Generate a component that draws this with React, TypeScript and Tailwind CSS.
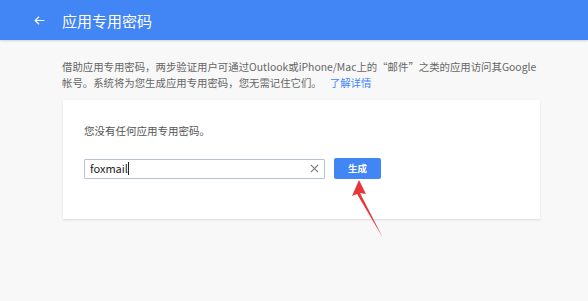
import React from 'react';

const FONT = { fontFamily: '"Noto Sans CJK SC", "Liberation Sans", sans-serif' };

export default function App() {
  return (
    <div className="relative w-[588px] h-[301px] bg-[#f8f8f8] overflow-hidden" style={FONT}>
      {/* Header */}
      <header className="h-10 bg-[#4285f4] flex items-center shadow-[0_1px_2px_rgba(0,0,0,0.15)]">
        <svg className="ml-[33px] w-[13px] h-[13px]" viewBox="0 0 24 24" fill="none" stroke="white" strokeWidth="2.2">
          <path d="M21 12H4M11 5l-7 7 7 7" />
        </svg>
        <h1 className="ml-[16px] text-[15px] text-white leading-none">应用专用密码</h1>
      </header>

      {/* Intro */}
      <p className="ml-[62px] mt-[19px] w-[500px] text-[10.4px] leading-[16px] text-[#666]">
        借助应用专用密码，两步验证用户可通过Outlook或iPhone/Mac上的“邮件”之类的应用访问其Google
        <br />
        帐号。系统将为您生成应用专用密码，您无需记住它们。<span className="ml-2 text-[#4285f4]">了解详情</span>
      </p>

      {/* Card */}
      <div className="ml-[63px] mt-[9px] w-[477px] h-[119px] bg-white shadow-[0_1px_2px_rgba(0,0,0,0.12)] px-[21px] pt-[24px]">
        <p className="text-[10.5px] text-[#555] leading-[14px]">您没有任何应用专用密码。</p>
        <div className="mt-[20px] flex items-center gap-[9px]">
          <div className="w-[241px] h-[20px] border border-[#b8c0dc] rounded-[1px] flex items-center px-[5px]">
            <span className="text-[11px] text-[#222]">foxmail</span>
            <span className="w-px h-[13px] bg-[#222]" />
            <span className="ml-auto text-[#777]">
              <svg width="9" height="9" viewBox="0 0 10 10" stroke="currentColor" strokeWidth="1.2">
                <path d="M1 1l8 8M9 1l-8 8" />
              </svg>
            </span>
          </div>
          <button className="w-[47px] h-[21px] bg-[#4285f4] rounded-[2px] text-white text-[9.5px] font-bold">生成</button>
        </div>
      </div>

      {/* Annotation arrow */}
      <svg className="absolute left-0 top-0 pointer-events-none" width="588" height="301">
        <polygon points="359,180 352,196 357,194 383,238 360,193 366,194" fill="#e8353a" />
      </svg>
    </div>
  );
}
